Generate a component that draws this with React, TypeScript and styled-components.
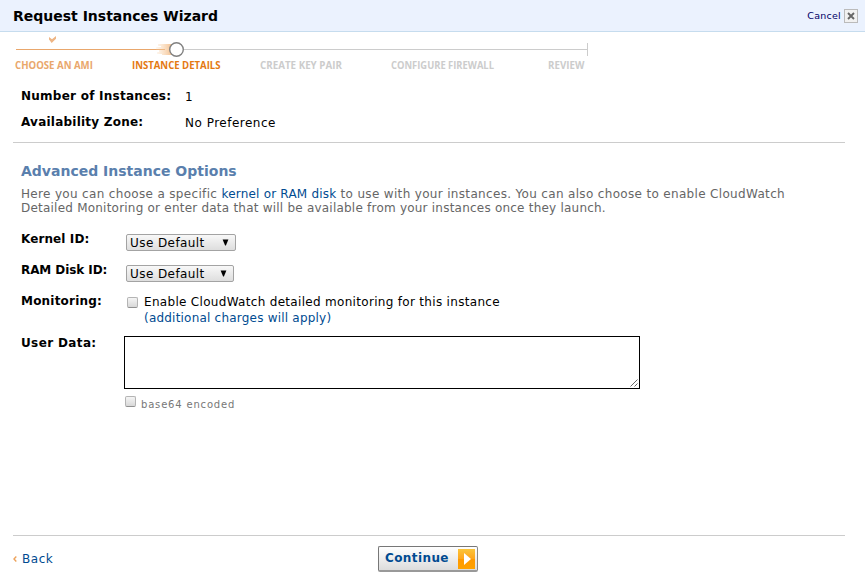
import React from "react";
import styled, { createGlobalStyle } from "styled-components";

const Global = createGlobalStyle`
  * { box-sizing: border-box; }
  body { margin: 0; background: #fff; font-family: "DejaVu Sans", sans-serif; color: #000; }
`;

const Wizard = styled.div`
  width: 865px;
  height: 580px;
  display: flex;
  flex-direction: column;
  overflow: hidden;
`;

const Header = styled.header`
  height: 32px;
  flex: none;
  display: flex;
  justify-content: space-between;
  background: #ebf2fe;
  border-bottom: 1px solid #c6dcee;
  padding: 0 7px 0 13px;
`;

const Title = styled.h1`
  margin: 0;
  font-size: 14px;
  line-height: 32px;
  white-space: nowrap;
`;

const Cancel = styled.a`
  display: flex;
  align-items: center;
  gap: 3px;
  color: #000066;
  font-size: 9.5px;
  letter-spacing: 0.25px;
`;

const Progress = styled.nav`
  height: 51px;
  flex: none;
  padding-left: 15px;
`;

const Track = styled.svg`
  display: block;
  width: 580px;
  height: 26px;
`;

const Steps = styled.ol`
  display: grid;
  grid-template-columns: 117px 128px 131px 157px 60px;
  margin: -1px 0 0;
  padding: 0;
  list-style: none;
`;

const Step = styled.li<{ $tone: string; $scale: number }>`
  color: ${(p) => p.$tone};
  font: bold 11px/15px "Open Sans", sans-serif;
  white-space: nowrap;
  transform: scaleX(${(p) => p.$scale});
  transform-origin: left;
`;

const Summary = styled.dl`
  display: grid;
  grid-template-columns: 164px 1fr;
  grid-template-rows: 26px 26px;
  height: 60px;
  margin: 0 20px 0 13px;
  padding-left: 8px;
  border-bottom: 1px solid #ccc;
  flex: none;
`;

const Label = styled.dt<{ $spacing?: number }>`
  font-size: 12px;
  font-weight: bold;
  line-height: 26px;
  letter-spacing: ${(p) => p.$spacing ?? 0}px;
  white-space: nowrap;
`;

const Value = styled.dd`
  margin: 0;
  font-size: 12px;
  line-height: 28px;
  letter-spacing: 0.5px;
`;

const Options = styled.section`
  flex: 1;
  padding: 20px 20px 0 21px;
`;

const SectionTitle = styled.h2`
  margin: 0;
  font-size: 14px;
  line-height: 16px;
  color: #5a7fad;
`;

const Intro = styled.p`
  margin: 8px 0 0;
  font-size: 12px;
  line-height: 14px;
  color: #666;
`;

const Line = styled.span<{ $spacing: number }>`
  display: block;
  white-space: nowrap;
  letter-spacing: ${(p) => p.$spacing}px;
`;

const Link = styled.a`
  color: #004b91;
  letter-spacing: 0.21px;
`;

const Fields = styled.dl`
  display: grid;
  grid-template-columns: 103px 1fr;
  grid-template-rows: 31px 31px 42px 90px;
  margin: 11px 0 0;
`;

const Field = styled.dd<{ $top?: number; $left?: number }>`
  margin: 0;
  padding: ${(p) => p.$top ?? 0}px 0 0 ${(p) => p.$left ?? 0}px;
  font-size: 12px;
`;

const Select = styled.button<{ $width: number }>`
  display: flex;
  align-items: center;
  justify-content: space-between;
  width: ${(p) => p.$width}px;
  height: 17px;
  padding: 1px 6px 0 3px;
  border: 1px solid #a3a3a3;
  border-radius: 2px;
  background: linear-gradient(#f8f8f8, #dedede);
  font: 12px/15px "DejaVu Sans", sans-serif;
  letter-spacing: 0.42px;
  color: #000;

  svg { margin-top: -2px; }
`;

const CheckRow = styled.label<{ $indent?: number }>`
  display: flex;
  align-items: flex-start;
  padding-left: ${(p) => p.$indent ?? 0}px;
`;

const Check = styled.input`
  appearance: none;
  flex: none;
  width: 11px;
  height: 11px;
  margin: 0;
  border: 1px solid #b4b4b4;
  border-bottom-color: #909090;
  border-radius: 2px;
  background: linear-gradient(#f5f5f5, #d8d8d8);
`;

const CheckText = styled.span`
  margin: -3px 0 0 6px;
  line-height: 16px;
`;

const SmallText = styled.span`
  margin: 1px 0 0 5px;
  font-size: 10px;
  line-height: 16px;
  letter-spacing: 0.82px;
  color: #777;
`;

const UserData = styled.textarea`
  display: block;
  width: 516px;
  height: 53px;
  margin: 0 0 7px;
  border: 1px solid #000;
  background: #fff;
  resize: none;
`;

const UserDataBox = styled.div`
  position: relative;
  width: 516px;
`;

const Grip = styled.svg`
  position: absolute;
  right: 2px;
  bottom: 2px;
`;

const Footer = styled.footer`
  height: 45px;
  flex: none;
  margin: 0 20px 0 13px;
  border-top: 1px solid #ccc;
  display: grid;
  grid-template-columns: 365px 1fr;
  align-items: start;
`;

const Back = styled.a`
  display: flex;
  align-items: center;
  gap: 5px;
  margin-top: 15px;
  font-size: 12px;
  line-height: 16px;
  letter-spacing: 0.55px;
  color: #004b91;
`;

const Continue = styled.button`
  display: flex;
  justify-content: space-between;
  width: 100px;
  height: 26px;
  margin-top: 10px;
  padding: 2px 1px 0 6px;
  border: 1px solid #777;
  border-bottom-width: 2px;
  border-right-color: #888;
  border-bottom-color: #999;
  border-radius: 2px;
  background: linear-gradient(#fff, #dcdcdc);
  color: #004b91;
  font: bold 12px/18px "DejaVu Sans", sans-serif;
  letter-spacing: 0.4px;
`;

const steps = [
  { text: "CHOOSE AN AMI", tone: "#e9a76c", scale: 0.875 },
  { text: "INSTANCE DETAILS", tone: "#e47911", scale: 0.87 },
  { text: "CREATE KEY PAIR", tone: "#ccc", scale: 0.89 },
  { text: "CONFIGURE FIREWALL", tone: "#ccc", scale: 0.853 },
  { text: "REVIEW", tone: "#ccc", scale: 0.885 },
];

const Arrow = () => (
  <svg width="7" height="7" viewBox="0 0 7 7">
    <path d="M0.6 0.5H6.4L3.9 6.5H3.1Z" fill="#000" />
  </svg>
);

export default function App() {
  return (
    <>
      <Global />
      <Wizard>
        <Header>
          <Title>Request Instances Wizard</Title>
          <Cancel>
            <span>Cancel</span>
            <svg width="14" height="14" viewBox="0 0 14 14">
              <rect x=".5" y=".5" width="13" height="13" fill="#f1f1f1" stroke="#bbb" />
              <path d="M4 4L10 10M10 4L4 10" stroke="#666" strokeWidth="1.9" />
            </svg>
          </Cancel>
        </Header>
        <Progress>
          <Track viewBox="15 32 580 26">
            <defs>
              <linearGradient id="trail" gradientUnits="userSpaceOnUse" x1="155" y1="0" x2="174" y2="0">
                <stop offset="0" stopColor="#f8d2a8" stopOpacity="0.1" />
                <stop offset="1" stopColor="#f3b880" />
              </linearGradient>
            </defs>
            <path d="M16 49.5H165" stroke="#e9a76c" />
            <path d="M180 49.5H587.5M587.5 43V56" stroke="#ccc" fill="none" />
            <path d="M49 37V39.5L51.7 43L56 38.8V36L52 39.3Z" fill="#eeb584" />
            <path
              d="M160 42H173V44H158V46H161V47H156V50H159V52H157V54H162V55H173V42Z"
              fill="url(#trail)"
            />
            <circle cx="176.5" cy="49.5" r="6.8" fill="#fff" stroke="#808080" strokeWidth="1.4" />
          </Track>
          <Steps>
            {steps.map((s) => (
              <Step key={s.text} $tone={s.tone} $scale={s.scale}>
                {s.text}
              </Step>
            ))}
          </Steps>
        </Progress>
        <Summary>
          <Label $spacing={0.25}>Number of Instances:</Label>
          <Value>1</Value>
          <Label $spacing={0.23}>Availability Zone:</Label>
          <Value>No Preference</Value>
        </Summary>
        <Options>
          <SectionTitle>Advanced Instance Options</SectionTitle>
          <Intro>
            <Line $spacing={0.33}>
              Here you can choose a specific <Link>kernel or RAM disk</Link> to use with your instances. You can also
              choose to enable CloudWatch
            </Line>
            <Line $spacing={0.22}>
              Detailed Monitoring or enter data that will be available from your instances once they launch.
            </Line>
          </Intro>
          <Fields>
            <Label $spacing={0.1}>Kernel ID:</Label>
            <Field $top={8} $left={2}>
              <Select $width={110}>
                Use Default <Arrow />
              </Select>
            </Field>
            <Label $spacing={-0.08}>RAM Disk ID:</Label>
            <Field $top={8} $left={2}>
              <Select $width={108}>
                Use Default <Arrow />
              </Select>
            </Field>
            <Label $spacing={0.2}>Monitoring:</Label>
            <Field $top={9} $left={3}>
              <CheckRow>
                <Check type="checkbox" />
                <CheckText>
                  <Line $spacing={0.31}>Enable CloudWatch detailed monitoring for this instance</Line>
                  <Link>(additional charges will apply)</Link>
                </CheckText>
              </CheckRow>
            </Field>
            <Label $spacing={0.37}>User Data:</Label>
            <Field $top={6}>
              <UserDataBox>
                <UserData />
                <Grip width="8" height="8" viewBox="0 0 8 8">
                  <path d="M0.5 7.5L7.5 .5M4.5 7.5L7.5 4.5" stroke="#666" />
                </Grip>
              </UserDataBox>
              <CheckRow $indent={1}>
                <Check type="checkbox" />
                <SmallText>base64 encoded</SmallText>
              </CheckRow>
            </Field>
          </Fields>
        </Options>
        <Footer>
          <Back>
            <svg width="4" height="6" viewBox="0 0 4 6">
              <path d="M3.3 .5L1 3L3.3 5.5" stroke="#eda35c" strokeWidth="1.4" fill="none" />
            </svg>
            Back
          </Back>
          <Continue>
            Continue
            <svg width="18" height="21" viewBox="0 0 18 21">
              <defs>
                <linearGradient id="gold" x2="0" y2="1">
                  <stop offset="0" stopColor="#fbc53a" />
                  <stop offset=".5" stopColor="#ffa51c" />
                  <stop offset=".5" stopColor="#ff9900" />
                  <stop offset="1" stopColor="#ffa200" />
                </linearGradient>
              </defs>
              <rect width="17" height="20" fill="url(#gold)" />
              <path d="M6 4L13 10L6 16Z" fill="#fff" />
            </svg>
          </Continue>
        </Footer>
      </Wizard>
    </>
  );
}
